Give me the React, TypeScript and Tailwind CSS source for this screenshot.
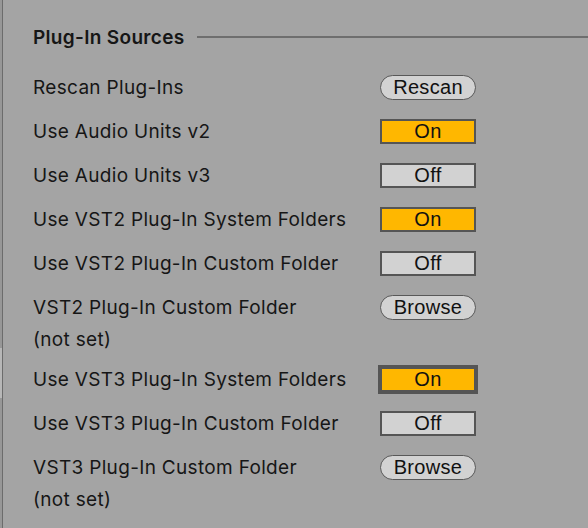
import React from 'react';

type Row =
  | { label: string; kind: 'rescan' }
  | { label: string; kind: 'toggle'; on: boolean; focused?: boolean }
  | { label: string; kind: 'browse'; path: string };

const rows: Row[] = [
  { label: 'Rescan Plug-Ins', kind: 'rescan' },
  { label: 'Use Audio Units v2', kind: 'toggle', on: true },
  { label: 'Use Audio Units v3', kind: 'toggle', on: false },
  { label: 'Use VST2 Plug-In System Folders', kind: 'toggle', on: true },
  { label: 'Use VST2 Plug-In Custom Folder', kind: 'toggle', on: false },
  { label: 'VST2 Plug-In Custom Folder', kind: 'browse', path: '(not set)' },
  { label: 'Use VST3 Plug-In System Folders', kind: 'toggle', on: true, focused: true },
  { label: 'Use VST3 Plug-In Custom Folder', kind: 'toggle', on: false },
  { label: 'VST3 Plug-In Custom Folder', kind: 'browse', path: '(not set)' },
];

function PillButton({ text }: { text: string }) {
  return (
    <button className="w-[96px] h-[25px] rounded-full border-[1.5px] border-[#585858] bg-[#d2d2d2] text-[20px] leading-none text-[#111] font-['Liberation_Sans',Arial,sans-serif] flex items-center justify-center">
      {text}
    </button>
  );
}

function Toggle({ on, focused }: { on: boolean; focused?: boolean }) {
  return (
    <button
      className={`w-[96px] h-[25px] border-2 border-[#555] text-[20px] leading-none text-[#111] font-['Liberation_Sans',Arial,sans-serif] flex items-center justify-center ${
        on ? 'bg-[#ffb700]' : 'bg-[#d2d2d2]'
      } ${focused ? 'outline-2 outline-[#555] outline-solid' : ''}`}
    >
      {on ? 'On' : 'Off'}
    </button>
  );
}

export default function App() {
  return (
    <div className="w-[588px] h-[528px] bg-[#a4a4a4] flex font-['Inter','Noto_Sans',sans-serif] text-[#161616] overflow-hidden tracking-[0.02em]">
      {/* left edge / scroll strip */}
      <div className="w-[2px] h-full bg-[#979797] flex flex-col">
        <div className="h-[348px]" />
        <div className="h-[50px] bg-[#b7b7b7]" />
      </div>
      <div className="w-px h-full bg-[#6c6c6c]" />

      <div className="flex-1 pt-[20px]">
        <div className="h-[34px] flex items-center pl-[30px]">
          <span className="text-[19px] font-semibold whitespace-nowrap pt-[2px]">Plug-In Sources</span>
          <div className="flex-1 h-[1.5px] bg-[#6e6e6e] ml-[13px]" />
        </div>

        <div className="mt-[11px]">
          {rows.map((r) => (
            <div key={r.label}>
              <div className="h-[44px] flex items-center pl-[30px]">
                <span className="w-[347px] text-[19px] whitespace-nowrap pt-[2px]">{r.label}</span>
                {r.kind === 'rescan' && <PillButton text="Rescan" />}
                {r.kind === 'browse' && <PillButton text="Browse" />}
                {r.kind === 'toggle' && <Toggle on={r.on} focused={r.focused} />}
              </div>
              {r.kind === 'browse' && (
                <div className="h-[28px] pl-[30px] text-[19px] leading-[20px] pt-px">{r.path}</div>
              )}
            </div>
          ))}
        </div>
      </div>
    </div>
  );
}
